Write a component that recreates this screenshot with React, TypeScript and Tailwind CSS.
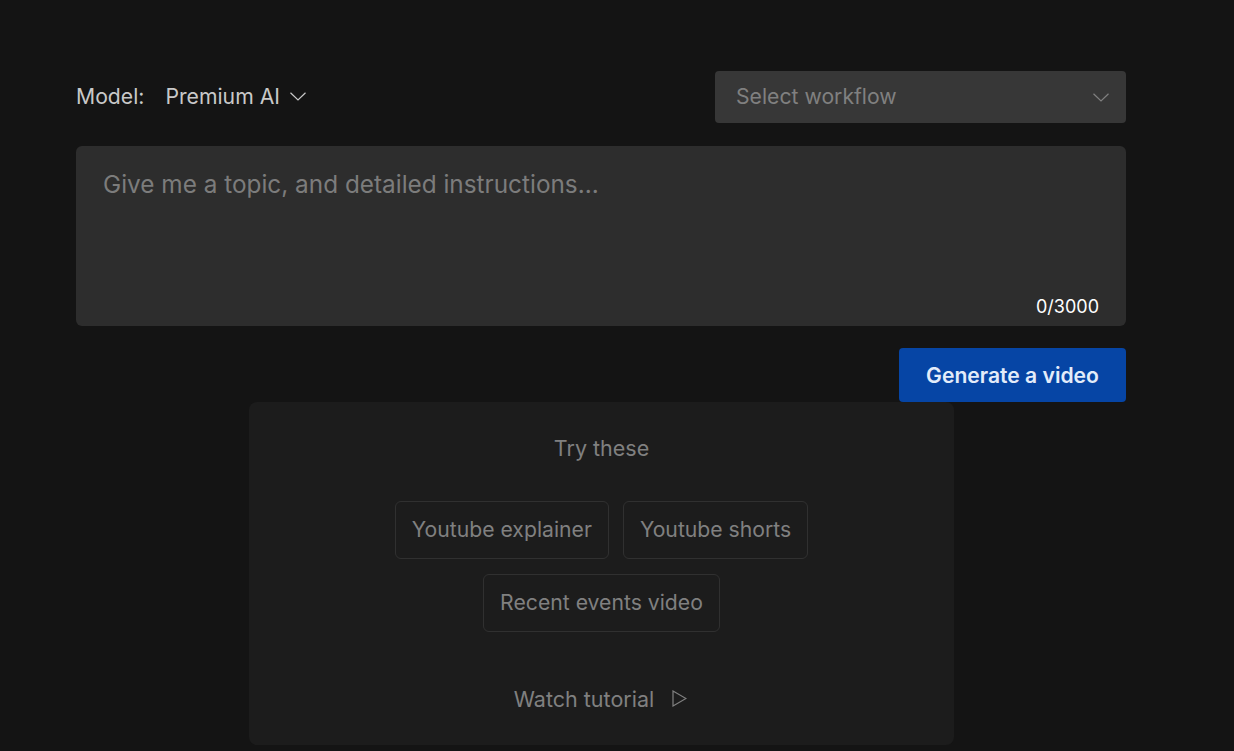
const suggestions = ['Youtube explainer', 'Youtube shorts', 'Recent events video'];

function Chevron({ className }: { className: string }) {
  return (
    <svg className={className} width="16" height="9" viewBox="0 0 16 9" fill="none" stroke="currentColor" strokeWidth="1.2">
      <path d="M0.5 0.7 L8 8 L15.5 0.7" />
    </svg>
  );
}

export default function App() {
  return (
    <div className="h-[751px] overflow-hidden bg-[#141414] font-['Inter',sans-serif]">
      <div className="ml-[76px] w-[1050px] pt-[71px]">
        <div className="flex h-[52px] items-center justify-between">
          <div className="flex items-center text-[21.2px] text-[#c9c9c9]">
            <span>Model:</span>
            <span className="ml-[21px]">Premium AI</span>
            <Chevron className="ml-[10px] text-[#c9c9c9]" />
          </div>
          <div className="flex h-[52px] w-[411px] items-center justify-between rounded-[4px] bg-[#373737] pl-[21px] pr-[17px] text-[21.2px] text-[#808080]">
            <span>Select workflow</span>
            <Chevron className="text-[#808080]" />
          </div>
        </div>

        <div className="mt-[23px] flex h-[180px] flex-col justify-between rounded-[6px] bg-[#2d2d2d] pb-[7px] pl-[27px] pr-[27px] pt-[22px]">
          <div className="text-[24.35px] leading-[32px] text-[#7c7c7c]">Give me a topic, and detailed instructions...</div>
          <div className="text-right text-[18px] leading-[24px] text-white">0/3000</div>
        </div>

        <div className="mt-[22px] flex justify-end">
          <button className="h-[54px] w-[227px] rounded-[4px] bg-[#0645a5] pt-[2px] text-[21.1px] font-semibold text-[#e3ecfa]">
            Generate a video
          </button>
        </div>
      </div>

      <div className="ml-[249px] flex h-[343px] w-[705px] flex-col items-center rounded-[8px] bg-[#1c1c1c] pt-[33px]">
        <div className="text-[21.5px] leading-[26px] text-[#808080]">Try these</div>
        <div className="mt-[40px] flex w-[440px] flex-wrap justify-center gap-x-[14.5px] gap-y-[15px]">
          {suggestions.map((s) => (
            <div
              key={s}
              className="flex h-[58px] items-center rounded-[6px] border border-[#303030] px-[15.75px] text-[21.2px] text-[#808080]"
            >
              {s}
            </div>
          ))}
        </div>
        <div className="mt-[51px] flex items-center pr-[2px] text-[21.5px] text-[#808080]">
          <span>Watch tutorial</span>
          <svg className="ml-[18px] mb-[2px]" width="15" height="17" viewBox="0 0 15 17" fill="none" stroke="currentColor" strokeWidth="1.2">
            <path d="M1 1 L14 8.5 L1 16 Z" />
          </svg>
        </div>
      </div>
    </div>
  );
}
